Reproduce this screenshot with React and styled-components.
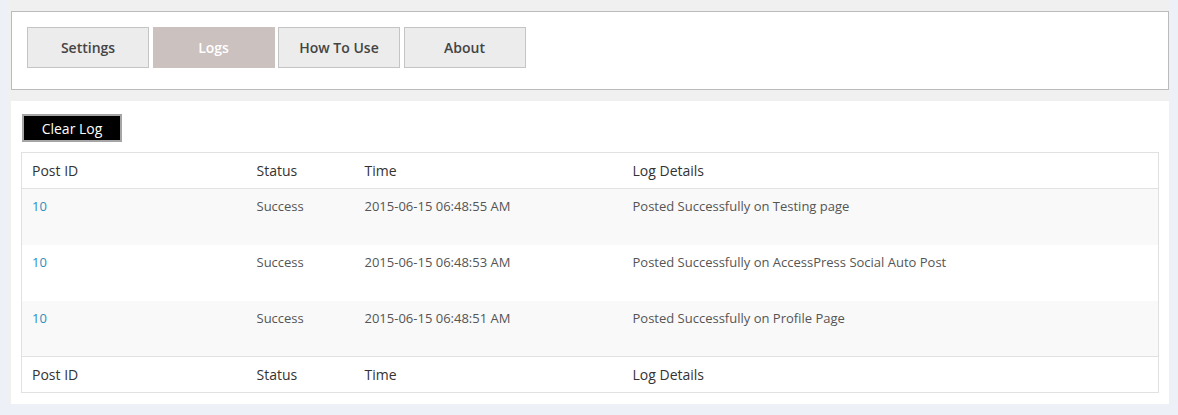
import React from "react";
import styled, { createGlobalStyle } from "styled-components";

const GlobalStyle = createGlobalStyle`
  html, body {
    margin: 0;
    padding: 0;
    background: #edf1f7;
  }
  body {
    font-family: "Open Sans", "Liberation Sans", sans-serif;
  }
  #root {
    padding: 0 8px 10px 8px;
  }
`;

const tabs = ["Settings", "Logs", "How To Use", "About"];

const logs = [
  { id: 10, status: "Success", time: "2015-06-15 06:48:55 AM", details: "Posted Successfully on Testing page" },
  { id: 10, status: "Success", time: "2015-06-15 06:48:53 AM", details: "Posted Successfully on AccessPress Social Auto Post" },
  { id: 10, status: "Success", time: "2015-06-15 06:48:51 AM", details: "Posted Successfully on Profile Page" },
];

export default function App() {
  return (
    <>
      <GlobalStyle />
      <WRAP>
        <NAV>
          {tabs.map((t) => (
            <TAB key={t} $active={t === "Logs"}>
              {t}
            </TAB>
          ))}
        </NAV>

        <PANEL>
          <CLEAR>Clear Log</CLEAR>
          <TABLE>
            <thead>
              <tr>
                <TH $w="225px">Post ID</TH>
                <TH $w="108px">Status</TH>
                <TH $w="268px">Time</TH>
                <TH>Log Details</TH>
              </tr>
            </thead>
            <tbody>
              {logs.map((row, i) => (
                <ROW key={i} $alt={i % 2 === 0}>
                  <TD>
                    <LINK href="#">{row.id}</LINK>
                  </TD>
                  <TD>{row.status}</TD>
                  <TD>{row.time}</TD>
                  <TD>{row.details}</TD>
                </ROW>
              ))}
            </tbody>
            <tfoot>
              <tr>
                <TH>Post ID</TH>
                <TH>Status</TH>
                <TH>Time</TH>
                <TH>Log Details</TH>
              </tr>
            </tfoot>
          </TABLE>
        </PANEL>
      </WRAP>
    </>
  );
}

const WRAP = styled.div`
  background: #f0f0f0;
  padding: 11px 1px 0 3px;
  width: 1158px;
`;

const NAV = styled.div`
  display: flex;
  gap: 3.5px;
  background: #fff;
  border: 1px solid #bbb;
  height: 79px;
  padding: 15px;
  box-sizing: border-box;
`;

const TAB = styled.div`
  width: 122px;
  height: 41px;
  box-sizing: border-box;
  display: flex;
  align-items: center;
  justify-content: center;
  padding-bottom: 1px;
  font-size: 14px;
  font-weight: 600;
  color: ${(p) => (p.$active ? "#fff" : "#444")};
  background: ${(p) => (p.$active ? "#cbc1bf" : "#ececec")};
  border: 1px solid ${(p) => (p.$active ? "#cbc1bf" : "#c4c4c4")};
`;

const PANEL = styled.div`
  margin-top: 11px;
  background: #fff;
  padding: 13px 10px 11px 10px;
`;

const CLEAR = styled.button`
  display: block;
  margin: 0 0 10px 1px;
  width: 100px;
  height: 28px;
  background: #000;
  color: #fff;
  border: 2px solid #a5a5a5;
  font-family: "Open Sans", "Liberation Sans", sans-serif;
  font-size: 14px;
  padding: 0;
`;

const TABLE = styled.table`
  width: 100%;
  border-collapse: collapse;
  border: 1px solid #e1e1e1;
  table-layout: fixed;
`;

const TH = styled.th`
  width: ${(p) => p.$w || "auto"};
  text-align: left;
  font-weight: 400;
  font-size: 14px;
  color: #333;
  height: 36px;
  padding: 0 10px;
  box-sizing: border-box;
  border-bottom: 1px solid #e1e1e1;
  tfoot & {
    border-top: 1px solid #e1e1e1;
    border-bottom: none;
  }
`;

const ROW = styled.tr`
  background: ${(p) => (p.$alt ? "#f9f9f9" : "#fff")};
`;

const TD = styled.td`
  height: 56px;
  box-sizing: border-box;
  vertical-align: top;
  padding: 8px 10px;
  font-size: 13px;
  color: #555;
`;

const LINK = styled.a`
  color: #2e8fbf;
  text-decoration: none;
`;
